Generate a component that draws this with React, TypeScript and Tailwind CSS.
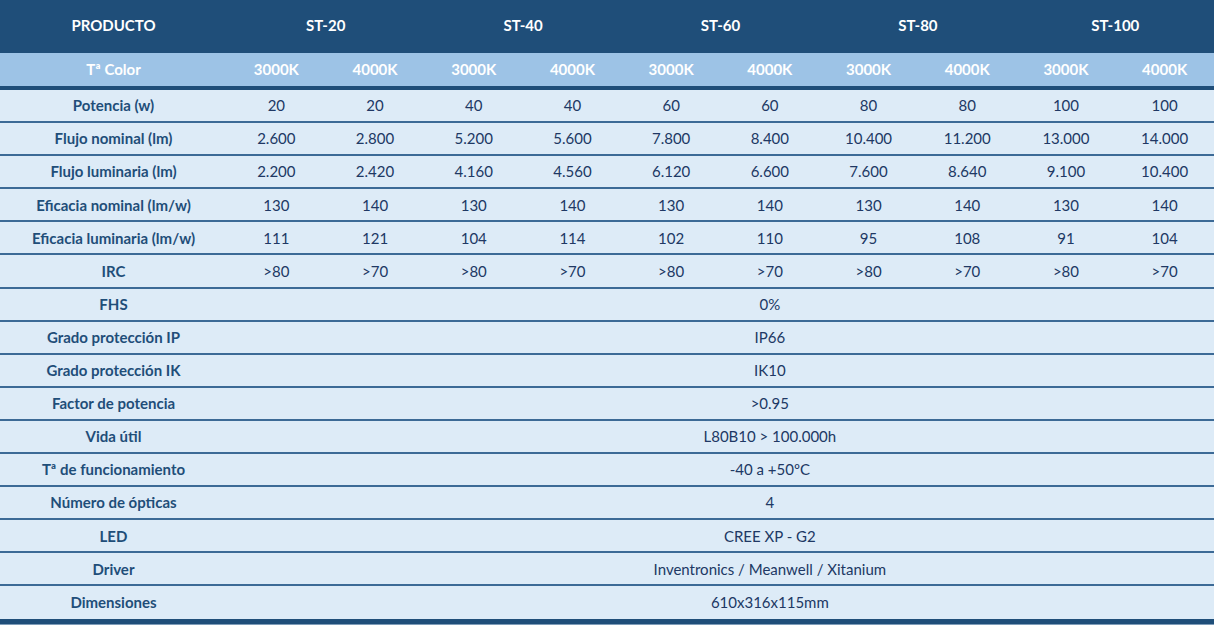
const MODELS = ["ST-20", "ST-40", "ST-60", "ST-80", "ST-100"];

type Row = { label: string; values?: string[]; merged?: string };

const ROWS: Row[] = [
  { label: "Potencia (w)", values: ["20", "20", "40", "40", "60", "60", "80", "80", "100", "100"] },
  {
    label: "Flujo nominal (lm)",
    values: ["2.600", "2.800", "5.200", "5.600", "7.800", "8.400", "10.400", "11.200", "13.000", "14.000"],
  },
  {
    label: "Flujo luminaria (lm)",
    values: ["2.200", "2.420", "4.160", "4.560", "6.120", "6.600", "7.600", "8.640", "9.100", "10.400"],
  },
  { label: "Eficacia nominal (lm/w)", values: ["130", "140", "130", "140", "130", "140", "130", "140", "130", "140"] },
  { label: "Eficacia luminaria (lm/w)", values: ["111", "121", "104", "114", "102", "110", "95", "108", "91", "104"] },
  { label: "IRC", values: [">80", ">70", ">80", ">70", ">80", ">70", ">80", ">70", ">80", ">70"] },
  { label: "FHS", merged: "0%" },
  { label: "Grado protección IP", merged: "IP66" },
  { label: "Grado protección IK", merged: "IK10" },
  { label: "Factor de potencia", merged: ">0.95" },
  { label: "Vida útil", merged: "L80B10 > 100.000h" },
  { label: "Tª de funcionamiento", merged: "-40 a +50ºC" },
  { label: "Número de ópticas", merged: "4" },
  { label: "LED", merged: "CREE XP - G2" },
  { label: "Driver", merged: "Inventronics / Meanwell / Xitanium" },
  { label: "Dimensiones", merged: "610x316x115mm" },
];

const COLS = "grid grid-cols-[227px_repeat(10,minmax(0,1fr))]";

export default function App() {
  return (
    <div className="w-[1216px] h-[626px] bg-white font-['Lato','Open_Sans',sans-serif] text-[15px]">
      <div className="w-[1214px]">
        <div className={`${COLS} h-[53px] pb-[2px] bg-[#1f4e79] text-white font-bold items-center`}>
          <div className="text-center">PRODUCTO</div>
          {MODELS.map((m) => (
            <div key={m} className="col-span-2 text-center">
              {m}
            </div>
          ))}
        </div>

        <div className={`${COLS} h-[37px] bg-[#9dc3e6] border-b-4 border-[#1f4e79] text-white font-bold items-center`}>
          <div className="text-center">Tª Color</div>
          {MODELS.map((m) => (
            <div key={m} className="contents">
              <div className="text-center">3000K</div>
              <div className="text-center">4000K</div>
            </div>
          ))}
        </div>

        {ROWS.map((row, i) => (
          <div
            key={row.label}
            className={`${COLS} bg-[#ddebf7] items-center ${
              i === ROWS.length - 1
                ? "h-[32.5px]"
                : "h-[33.1px] border-b-2 border-[#3c6a96]"
            }`}
          >
            <div className="text-center font-bold text-[#1f4e79]">{row.label}</div>
            {row.values
              ? row.values.map((v, j) => (
                  <div key={j} className="text-center text-[#203864]">
                    {v}
                  </div>
                ))
              : (
                  <div className="col-start-3 col-end-12 text-center text-[#203864]">{row.merged}</div>
                )}
          </div>
        ))}

        <div className="h-[5px] bg-[#1f4e79]" />
        <div className="h-[1px] bg-[#7f9db9]" />
      </div>
    </div>
  );
}
